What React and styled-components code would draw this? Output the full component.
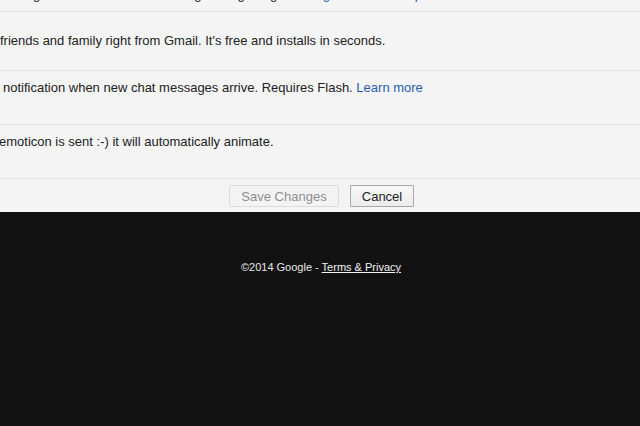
import React from "react";
import styled, { createGlobalStyle } from "styled-components";

const Global = createGlobalStyle`
  html, body { margin: 0; padding: 0; }
  body {
    background: #121212;
    font-family: "Liberation Sans", Arial, sans-serif;
    overflow: hidden;
  }
`;

const Page = styled.div`
  display: flex;
  flex-direction: column;
  min-height: 426px;
  width: 640px;
`;

const Settings = styled.section`
  background: #f4f4f4;
  display: flex;
  flex-direction: column;
  overflow: hidden;
`;

/* the previous setting's line, scrolled almost out of view */
const TopStrip = styled.div`
  height: 11px;
  overflow: hidden;
  border-bottom: 1px solid #e1e1e1;
`;

const CutLine = styled.div`
  margin-top: -13px;
  font-size: 13px;
  line-height: 15px;
  color: #222;
  white-space: nowrap;
  padding-left: 33px;
`;

const Row = styled.div`
  height: ${(p) => p.$h}px;
  box-sizing: border-box;
  padding-top: ${(p) => p.$top}px;
  border-bottom: 1px solid #e1e1e1;
`;

const Desc = styled.div`
  font-size: 13px;
  line-height: 15px;
  color: #222;
  white-space: nowrap;
  margin-left: ${(p) => p.$indent}px;
`;

const Link = styled.a`
  color: #2a5db0;
  text-decoration: none;
  cursor: pointer;
`;

const Actions = styled.div`
  height: 33px;
  box-sizing: border-box;
  padding-top: 6px;
  display: flex;
  justify-content: center;
  gap: 11px;
  padding-left: 3px;
`;

const Button = styled.button`
  height: 22px;
  width: ${(p) => p.$w}px;
  box-sizing: border-box;
  padding: 0;
  font-family: "Liberation Sans", Arial, sans-serif;
  font-size: 13px;
  border-radius: 1px;
  border: 1px solid ${(p) => (p.disabled ? "#dcdcdc" : "#a8a8a8")};
  color: ${(p) => (p.disabled ? "#8f8f8f" : "#222")};
  background: ${(p) =>
    p.disabled ? "#f3f3f3" : "linear-gradient(#f8f8f8, #ececec)"};
`;

const Footer = styled.footer`
  flex: 1;
  background: #121212;
  display: flex;
  justify-content: center;
  padding-top: 49px;
  padding-left: 2px;
`;

const FootText = styled.div`
  color: #e8e8e8;
  font-size: 11px;
  line-height: 13px;
`;

const FootLink = styled.a`
  color: #f2f2f2;
  text-decoration: underline;
`;

export default function App() {
  return (
    <Page>
      <Global />
      <Settings>
        <TopStrip>
          <CutLine>
            goes on the chat list and all go and get a glance –{" "}
            <Link>get a video setup</Link>
          </CutLine>
        </TopStrip>
        <Row $h={59} $top={21}>
          <Desc $indent={0}>
            friends and family right from Gmail. It's free and installs in seconds.
          </Desc>
        </Row>
        <Row $h={54} $top={9}>
          <Desc $indent={3}>
            notification when new chat messages arrive. Requires Flash.{" "}
            <Link>Learn more</Link>
          </Desc>
        </Row>
        <Row $h={54} $top={9}>
          <Desc $indent={-1}>
            emoticon is sent :-) it will automatically animate.
          </Desc>
        </Row>
        <Actions>
          <Button $w={110} disabled>
            Save Changes
          </Button>
          <Button $w={64}>Cancel</Button>
        </Actions>
      </Settings>
      <Footer>
        <FootText>
          ©2014 Google - <FootLink>Terms &amp; Privacy</FootLink>
        </FootText>
      </Footer>
    </Page>
  );
}
